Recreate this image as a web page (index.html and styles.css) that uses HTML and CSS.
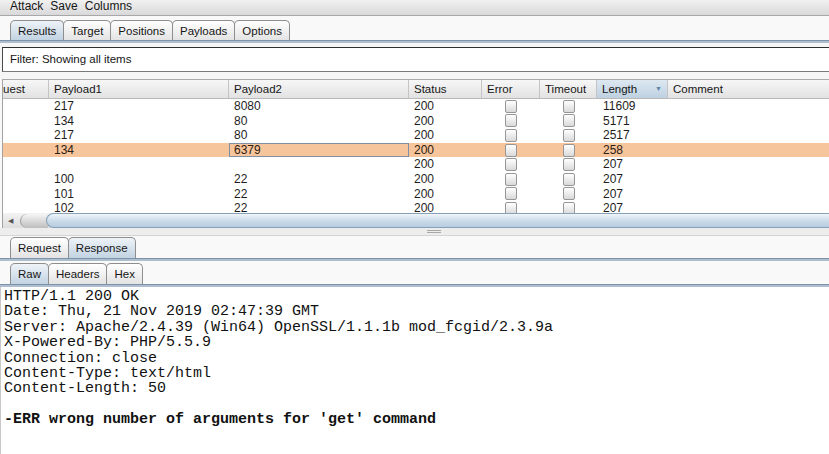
FILE: index.html
```html
<!DOCTYPE html>
<html>
<head>
<meta charset="utf-8">
<link rel="stylesheet" href="styles.css">
</head>
<body>
<div class="menubar">
  <span class="menu">Attack</span>
  <span class="menu">Save</span>
  <span class="menu">Columns</span>
</div>

<div class="tabrow main">
  <div class="tab sel">Results</div>
  <div class="tab">Target</div>
  <div class="tab">Positions</div>
  <div class="tab">Payloads</div>
  <div class="tab">Options</div>
</div>
<div class="strip"></div>

<div class="filter-area">
  <div class="filter">Filter: Showing all items</div>
</div>

<div class="table">
  <div class="thead">
    <div class="th clip"><span class="cut">Request</span></div>
    <div class="th">Payload1</div>
    <div class="th">Payload2</div>
    <div class="th">Status</div>
    <div class="th">Error</div>
    <div class="th">Timeout</div>
    <div class="th sorted"><span>Length</span><span class="arrow">▼</span></div>
    <div class="th last">Comment</div>
  </div>
  <div class="tbody">
    <div class="tr"><div class="td"></div><div class="td">217</div><div class="td">8080</div><div class="td">200</div><div class="td cb"><span class="box"></span></div><div class="td cb"><span class="box"></span></div><div class="td len">11609</div><div class="td"></div></div>
    <div class="tr"><div class="td"></div><div class="td">134</div><div class="td">80</div><div class="td">200</div><div class="td cb"><span class="box"></span></div><div class="td cb"><span class="box"></span></div><div class="td len">5171</div><div class="td"></div></div>
    <div class="tr"><div class="td"></div><div class="td">217</div><div class="td">80</div><div class="td">200</div><div class="td cb"><span class="box"></span></div><div class="td cb"><span class="box"></span></div><div class="td len">2517</div><div class="td"></div></div>
    <div class="tr hl"><div class="td"></div><div class="td">134</div><div class="td focus">6379</div><div class="td">200</div><div class="td cb"><span class="box"></span></div><div class="td cb"><span class="box"></span></div><div class="td len">258</div><div class="td"></div></div>
    <div class="tr"><div class="td"></div><div class="td"></div><div class="td"></div><div class="td">200</div><div class="td cb"><span class="box"></span></div><div class="td cb"><span class="box"></span></div><div class="td len">207</div><div class="td"></div></div>
    <div class="tr"><div class="td"></div><div class="td">100</div><div class="td">22</div><div class="td">200</div><div class="td cb"><span class="box"></span></div><div class="td cb"><span class="box"></span></div><div class="td len">207</div><div class="td"></div></div>
    <div class="tr"><div class="td"></div><div class="td">101</div><div class="td">22</div><div class="td">200</div><div class="td cb"><span class="box"></span></div><div class="td cb"><span class="box"></span></div><div class="td len">207</div><div class="td"></div></div>
    <div class="tr"><div class="td"></div><div class="td">102</div><div class="td">22</div><div class="td">200</div><div class="td cb"><span class="box"></span></div><div class="td cb"><span class="box"></span></div><div class="td len">207</div><div class="td"></div></div>
  </div>
  <div class="hscroll">
    <span class="larrow">◀</span>
    <span class="cap"></span>
    <span class="thumb"></span>
  </div>
</div>

<div class="splitter"><span class="grip"></span></div>

<div class="tabrow sub1">
  <div class="tab">Request</div>
  <div class="tab sel">Response</div>
</div>
<div class="strip"></div>

<div class="tabrow sub2">
  <div class="tab sel">Raw</div>
  <div class="tab">Headers</div>
  <div class="tab">Hex</div>
</div>
<div class="strip"></div>

<div class="response">HTTP/1.1 200 OK
Date: Thu, 21 Nov 2019 02:47:39 GMT
Server: Apache/2.4.39 (Win64) OpenSSL/1.1.1b mod_fcgid/2.3.9a
X-Powered-By: PHP/5.5.9
Connection: close
Content-Type: text/html
Content-Length: 50

<b>-ERR wrong number of arguments for 'get' command</b></div>
</body>
</html>
```

FILE: styles.css
```css
* { box-sizing: border-box; }

html, body {
  margin: 0;
  padding: 0;
}

body {
  width: 829px;
  height: 454px;
  overflow: hidden;
  background: #f8f8f8;
  font-family: "Liberation Sans", Arial, sans-serif;
  font-size: 11.5px;
  color: #161616;
}

/* menu bar */
.menubar {
  height: 16px;
  display: flex;
  gap: 7px;
  padding-left: 10px;
  line-height: 13px;
  font-size: 12px;
  background: linear-gradient(#f1f1f1, #d9d9db);
  border-bottom: 1px solid #a8a8a8;
}

/* tabs */
.tabrow {
  display: flex;
  padding-left: 10px;
  background: #f9f9f9;
}
.tabrow.main { padding-top: 4px; }
.tabrow.sub1 { padding-top: 1px; }
.tabrow.sub2 { padding-top: 2px; }

.tab {
  height: 20px;
  padding: 0 7px;
  line-height: 20px;
  font-size: 11.5px;
  border: 1px solid #8e8e8e;
  border-bottom: none;
  border-radius: 5px 5px 0 0;
  margin-right: -1px;
  background: linear-gradient(#ffffff, #e3e3e3);
  white-space: nowrap;
}
.sub1 .tab, .sub2 .tab { height: 21px; line-height: 21px; }
.tab.sel {
  background: linear-gradient(#eef3f8, #c2d3e2);
  position: relative;
  z-index: 1;
}

.strip {
  height: 3px;
  background: #adbecf;
  border-top: 1px solid #7f93a8;
}

/* filter */
.filter-area {
  padding: 4px 0 7px 2px;
  background: #f6f6f6;
}
.filter {
  height: 25px;
  background: #ffffff;
  border: 1px solid;
  border-color: #2e2e2e #8a8a8a #7a7a7a #4a4a4a;
  border-right: none;
  padding-left: 7px;
  line-height: 23px;
  font-size: 11.5px;
}

/* table */
.table {
  margin-left: 2px;
  border-left: 1px solid #a2a2a2;
  border-top: 1px solid #a9a9a9;
  background: #ffffff;
}
.thead, .tr {
  display: grid;
  grid-template-columns: 46px 180px 180px 73px 58px 57px 71px 1fr;
}
.thead {
  height: 19px;
  border-bottom: 1px solid #b9b9b9;
  background: linear-gradient(#f7f7f7, #e2e2e2);
}
.th {
  padding-left: 5px;
  line-height: 18px;
  border-right: 1px solid #c4c4c4;
  overflow: hidden;
  white-space: nowrap;
}
.th.last { border-right: none; }
.th.clip { padding-left: 0; }
.th .cut { display: inline-block; margin-left: -21px; }
.th.sorted {
  display: flex;
  justify-content: space-between;
  padding-right: 5px;
  background: linear-gradient(#dde8f1, #bed1e1);
}
.arrow {
  font-size: 7px;
  color: #5f84a8;
}

.tbody {
  height: 114px;
  overflow: hidden;
}
.tr {
  height: 14.6px;
}
.td {
  padding-left: 5px;
  padding-top: 1px;
  line-height: 13px;
  font-size: 12px;
  color: #1e1e1e;
  white-space: nowrap;
}
.td.len { padding-left: 6px; }
.td.cb {
  padding: 0;
  display: flex;
  justify-content: center;
  align-items: center;
}
.box {
  width: 12px;
  height: 13px;
  border: 1px solid #969696;
  border-radius: 2px;
  background: linear-gradient(#ffffff, #d9d9d9);
}
.tr.hl { background: #f6c59c; }
.tr.hl .td { color: #2e2010; }
.td.focus { box-shadow: inset 0 0 0 1px #7f90a6; }

/* horizontal scrollbar */
.hscroll {
  height: 15px;
  display: flex;
  align-items: stretch;
  background: linear-gradient(#f2f2f2, #dddddd);
}
.larrow {
  width: 17px;
  font-size: 7px;
  line-height: 15px;
  padding-left: 5px;
  color: #555555;
}
.cap {
  width: 28px;
  margin-top: 1px;
  border-radius: 7px 0 0 7px;
  background: linear-gradient(#f6f6f6, #bdbdbd);
  border-left: 1px solid #999999;
}
.thumb {
  flex: 1;
  margin-left: -2px;
  border: 1px solid #86a0b8;
  border-radius: 8px 0 0 8px;
  border-right: none;
  background: linear-gradient(#f0f5fa, #c6d8e8 60%, #b8cde0);
}

/* splitter */
.splitter {
  height: 8px;
  background: #ededed;
  border-bottom: 1px solid #d4d4d4;
  display: flex;
  justify-content: center;
  padding-top: 2px;
}
.grip {
  width: 14px;
  height: 3px;
  margin-left: 38px;
  border-top: 1px solid #a8a8a8;
  border-bottom: 1px solid #a8a8a8;
}

/* response body */
.response {
  height: 170px;
  background: #ffffff;
  border-left: 1px solid #c8c8c8;
  padding: 2px 0 0 3px;
  font-family: "Liberation Mono", "Courier New", monospace;
  font-size: 15px;
  line-height: 15.4px;
  white-space: pre;
  color: #111111;
}
.response b { font-weight: bold; }
```
